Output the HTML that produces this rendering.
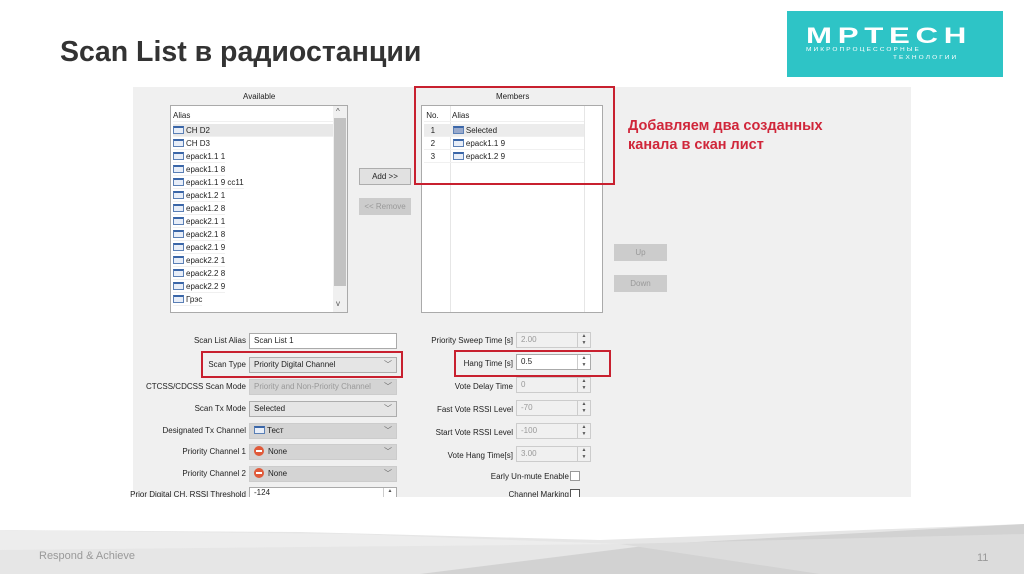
<!DOCTYPE html>
<html><head><meta charset="utf-8"><style>
*{margin:0;padding:0;box-sizing:border-box}
body{width:1024px;height:574px;position:relative;overflow:hidden;background:#fff;font-family:"Liberation Sans",sans-serif}
.a{position:absolute}
.s{font-size:8px;color:#222;white-space:nowrap}
.lst{position:absolute;background:#fff;border:1px solid #aaa}
.row{position:absolute;left:2px;height:13px;font-size:8px;line-height:13px;color:#222;white-space:nowrap;border-bottom:1px solid #f0f0f0}
.ic{display:inline-block;width:11px;height:8px;background:#e8eef8;border:1px solid #5a7fb5;border-top:2px solid #3a66a8;vertical-align:-1px;margin-right:2px}
.btn{position:absolute;background:#e1e1e1;border:1px solid #adadad;font-size:8px;text-align:center;line-height:15px;color:#222}
.btn.d{background:#ccc;border-color:#ccc;color:#999}
.lbl{position:absolute;font-size:8px;color:#222;text-align:right;white-space:nowrap}
.fld{position:absolute;height:16px;border:1px solid #aaa;background:#fff;font-size:8px;line-height:14px;padding-left:4px;color:#222;white-space:nowrap}
.cb{background:#e5e5e5;border-color:#adadad}
.dis{background:#d4d4d4;border-color:#ccc;color:#999}
.chev{position:absolute;right:4px;top:0;font-size:8px;color:#666}
.sp{position:absolute;right:0;top:0;width:13px;height:14px;border-left:1px solid #ccc;font-size:5px;line-height:7px;text-align:center;color:#555}
.red{position:absolute;border:2px solid #c8202f}
.no{display:inline-block;width:10px;height:10px;border-radius:50%;background:#e05a3a;vertical-align:-2px;margin-right:4px;position:relative}
.no:after{content:"";position:absolute;left:2px;top:4px;width:6px;height:2px;background:#fff}
</style></head><body>
<div class="a" style="left:60px;top:36px;font-size:28.5px;font-weight:bold;color:#333">Scan List в радиостанции</div>
<div class="a" style="left:787px;top:11px;width:216px;height:66px;background:#2ec4c6"></div>
<div class="a" style="left:806px;top:23px;font-size:22px;font-weight:bold;color:#fff;letter-spacing:4px;transform:scaleX(1.42);transform-origin:left">MPTECH</div>
<div class="a" style="left:806px;top:47px;font-size:5px;color:#fff;letter-spacing:1.6px;transform:scaleX(1.3);transform-origin:left">МИКРОПРОЦЕССОРНЫЕ</div>
<div class="a" style="left:893px;top:55px;font-size:5px;color:#fff;letter-spacing:1.6px;transform:scaleX(1.3);transform-origin:left">ТЕХНОЛОГИИ</div>

<div class="a" style="left:133px;top:87px;width:778px;height:410px;background:#f0f0f0"></div>
<div class="a s" style="left:243px;top:92px">Available</div>
<div class="a s" style="left:496px;top:92px">Members</div>
<div class="lst" style="left:170px;top:105px;width:178px;height:208px">
 <div class="row" style="top:3px;width:160px">Alias</div>
 <div class="row" style="top:18px;width:160px;background:#e8e8e8"><span class="ic"></span>CH D2</div>
 <div class="row" style="top:31px"><span class="ic"></span>CH D3</div>
 <div class="row" style="top:44px"><span class="ic"></span>epack1.1 1</div>
 <div class="row" style="top:57px"><span class="ic"></span>epack1.1 8</div>
 <div class="row" style="top:70px"><span class="ic"></span>epack1.1 9 cc11</div>
 <div class="row" style="top:83px"><span class="ic"></span>epack1.2 1</div>
 <div class="row" style="top:96px"><span class="ic"></span>epack1.2 8</div>
 <div class="row" style="top:109px"><span class="ic"></span>epack2.1 1</div>
 <div class="row" style="top:122px"><span class="ic"></span>epack2.1 8</div>
 <div class="row" style="top:135px"><span class="ic"></span>epack2.1 9</div>
 <div class="row" style="top:148px"><span class="ic"></span>epack2.2 1</div>
 <div class="row" style="top:161px"><span class="ic"></span>epack2.2 8</div>
 <div class="row" style="top:174px"><span class="ic"></span>epack2.2 9</div>
 <div class="row" style="top:187px"><span class="ic"></span>Грэс</div>
 <div class="a" style="left:162px;top:0;width:14px;height:206px;background:#f0f0f0"></div>
 <div class="a" style="left:163px;top:12px;width:12px;height:168px;background:#c2c2c2"></div>
 <div class="a s" style="left:165px;top:1px;color:#555">^</div>
 <div class="a s" style="left:165px;top:193px;color:#555">v</div>
</div>
<div class="btn" style="left:359px;top:168px;width:52px;height:17px">Add &gt;&gt;</div>
<div class="btn d" style="left:359px;top:198px;width:52px;height:17px">&lt;&lt; Remove</div>
<div class="lst" style="left:421px;top:105px;width:182px;height:208px">
 <div class="a" style="left:28px;top:0;width:1px;height:206px;background:#e6e6e6"></div>
 <div class="a" style="left:162px;top:0;width:1px;height:206px;background:#e6e6e6"></div>
 <div class="row" style="top:3px;width:160px">&nbsp;No.&nbsp;&nbsp;&nbsp;&nbsp;&nbsp;&nbsp;Alias</div>
 <div class="row" style="top:18px;width:160px;background:#ececec">&nbsp;&nbsp;&nbsp;1&nbsp;&nbsp;&nbsp;&nbsp;&nbsp;&nbsp;&nbsp;&nbsp;<span class="ic" style="background:#9ac"></span>Selected</div>
 <div class="row" style="top:31px;width:160px">&nbsp;&nbsp;&nbsp;2&nbsp;&nbsp;&nbsp;&nbsp;&nbsp;&nbsp;&nbsp;&nbsp;<span class="ic"></span>epack1.1 9</div>
 <div class="row" style="top:44px;width:160px">&nbsp;&nbsp;&nbsp;3&nbsp;&nbsp;&nbsp;&nbsp;&nbsp;&nbsp;&nbsp;&nbsp;<span class="ic"></span>epack1.2 9</div>
</div>
<div class="red" style="left:414px;top:86px;width:201px;height:99px"></div>
<div class="a" style="left:628px;top:117px;font-size:14.5px;font-weight:bold;color:#d0263a;line-height:19px;font-family:'Liberation Sans',sans-serif">Добавляем два созданных<br>канала в скан лист</div>
<div class="btn d" style="left:614px;top:244px;width:53px;height:17px">Up</div>
<div class="btn d" style="left:614px;top:275px;width:53px;height:17px">Down</div>

<div class="lbl" style="right:778px;top:336px">Scan List Alias</div>
<div class="fld" style="left:249px;top:333px;width:148px">Scan List 1</div>
<div class="lbl" style="right:778px;top:360px">Scan Type</div>
<div class="fld cb" style="left:249px;top:357px;width:148px">Priority Digital Channel<span class="chev">﹀</span></div>
<div class="lbl" style="right:778px;top:382px">CTCSS/CDCSS Scan Mode</div>
<div class="fld dis" style="left:249px;top:379px;width:148px">Priority and Non-Priority Channel<span class="chev">﹀</span></div>
<div class="lbl" style="right:778px;top:404px">Scan Tx Mode</div>
<div class="fld cb" style="left:249px;top:401px;width:148px">Selected<span class="chev">﹀</span></div>
<div class="lbl" style="right:778px;top:426px">Designated Tx Channel</div>
<div class="fld dis" style="left:249px;top:423px;width:148px;color:#222"><span class="ic"></span>Тест<span class="chev">﹀</span></div>
<div class="lbl" style="right:778px;top:447px">Priority Channel 1</div>
<div class="fld dis" style="left:249px;top:444px;width:148px;color:#222"><span class="no"></span>None<span class="chev">﹀</span></div>
<div class="lbl" style="right:778px;top:469px">Priority Channel 2</div>
<div class="fld dis" style="left:249px;top:466px;width:148px;color:#222"><span class="no"></span>None<span class="chev">﹀</span></div>
<div class="lbl" style="right:778px;top:490px;height:7px;overflow:hidden">Prior Digital CH. RSSI Threshold</div>
<div class="fld" style="left:249px;top:487px;width:148px;height:10px;line-height:10px;overflow:hidden;border-bottom:none">-124<span class="sp">▲</span></div>
<div class="red" style="left:201px;top:351px;width:202px;height:27px"></div>

<div class="lbl" style="right:511px;top:336px">Priority Sweep Time [s]</div>
<div class="fld dis" style="left:516px;top:332px;width:75px;background:#f0f0f0">2.00<span class="sp">▲<br>▼</span></div>
<div class="lbl" style="right:511px;top:359px">Hang Time [s]</div>
<div class="fld" style="left:516px;top:354px;width:75px">0.5<span class="sp">▲<br>▼</span></div>
<div class="lbl" style="right:511px;top:382px">Vote Delay Time</div>
<div class="fld dis" style="left:516px;top:377px;width:75px;background:#f0f0f0">0<span class="sp">▲<br>▼</span></div>
<div class="lbl" style="right:511px;top:405px">Fast Vote RSSI Level</div>
<div class="fld dis" style="left:516px;top:400px;width:75px;background:#f0f0f0">-70<span class="sp">▲<br>▼</span></div>
<div class="lbl" style="right:511px;top:428px">Start Vote RSSI Level</div>
<div class="fld dis" style="left:516px;top:423px;width:75px;background:#f0f0f0">-100<span class="sp">▲<br>▼</span></div>
<div class="lbl" style="right:511px;top:451px">Vote Hang Time[s]</div>
<div class="fld dis" style="left:516px;top:446px;width:75px;background:#f0f0f0">3.00<span class="sp">▲<br>▼</span></div>
<div class="lbl" style="right:455px;top:472px">Early Un-mute Enable</div>
<div class="a" style="left:570px;top:471px;width:10px;height:10px;background:#fff;border:1px solid #999"></div>
<div class="lbl" style="right:455px;top:490px;height:7px;overflow:hidden">Channel Marking</div>
<div class="a" style="left:570px;top:489px;width:10px;height:8px;background:#fff;border:1px solid #555;border-bottom:none"></div>
<div class="red" style="left:454px;top:350px;width:157px;height:27px"></div>

<svg class="a" style="left:0;top:520px" width="1024" height="54">
<polygon points="0,10 300,12 600,20 1024,4 1024,54 0,54" fill="#e6e6e6"/>
<polygon points="0,10 350,14 620,24 0,30" fill="#ededed"/>
<polygon points="420,54 660,24 1024,4 1024,54" fill="#d2d2d2"/>
<polygon points="620,24 1024,14 1024,54 820,54" fill="#dcdcdc"/>
</svg>
<div class="a" style="left:39px;top:550px;font-size:11px;color:#999">Respond &amp; Achieve</div>
<div class="a" style="left:977px;top:552px;font-size:11px;color:#999">11</div>
</body></html>
